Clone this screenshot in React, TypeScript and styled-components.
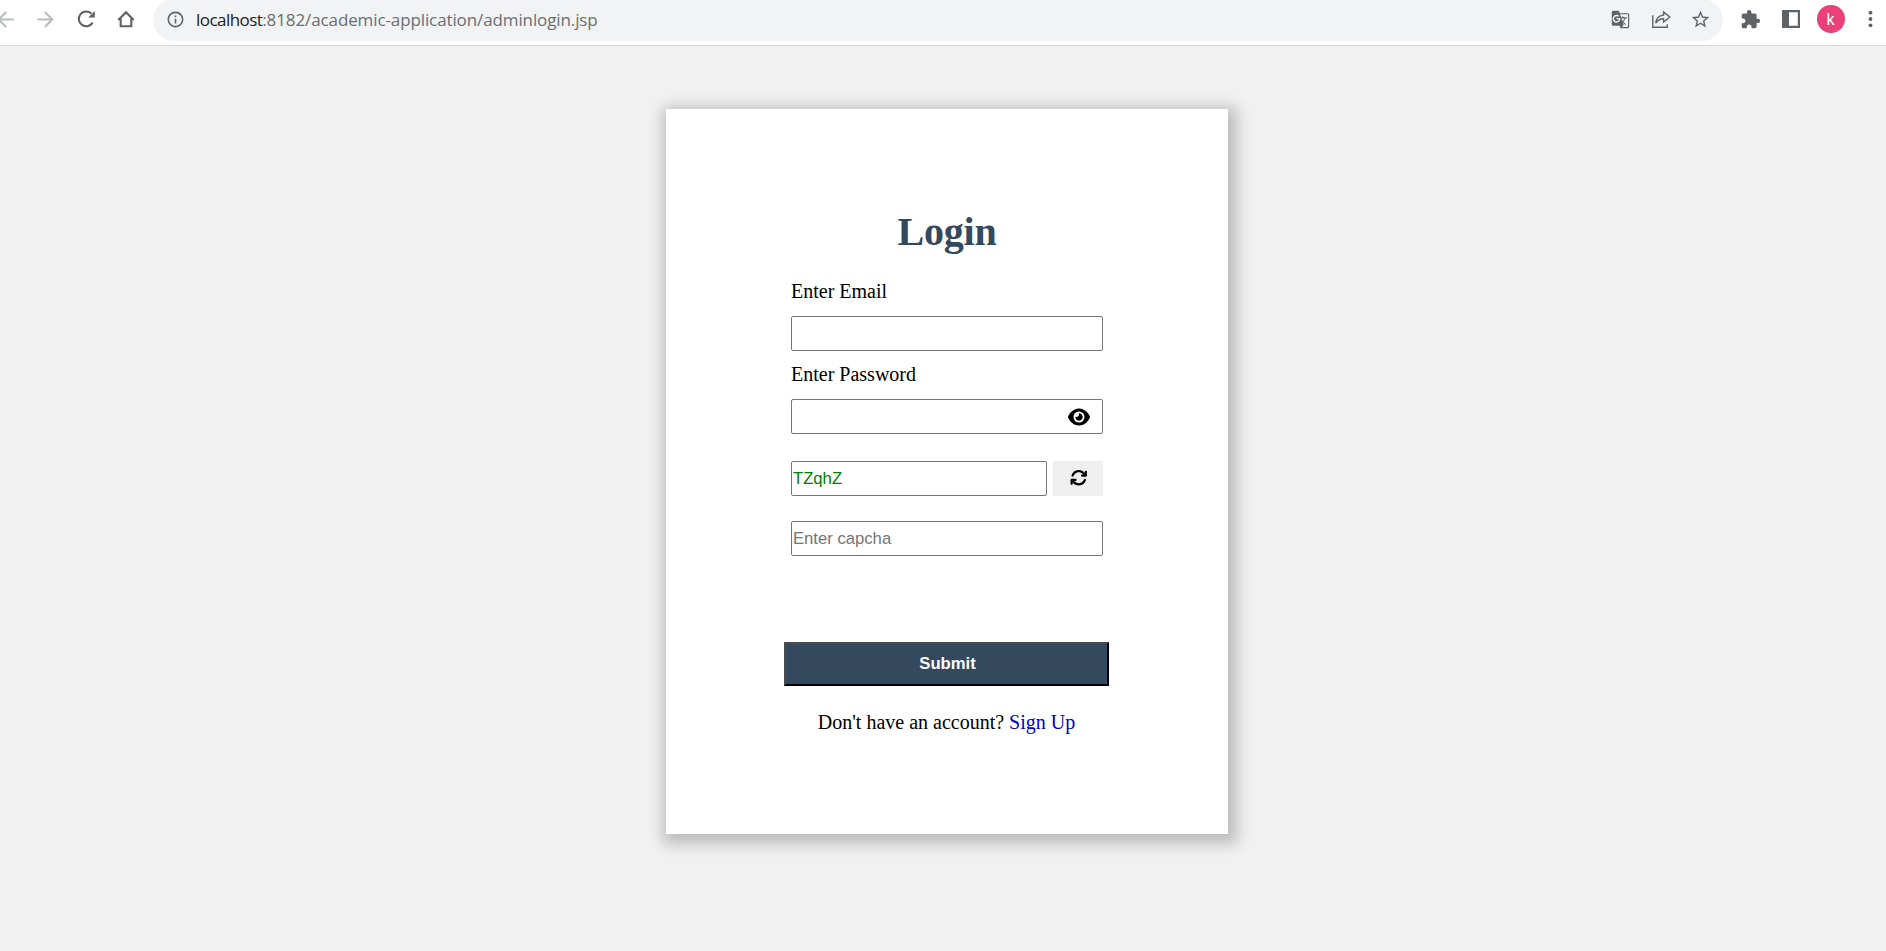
import React from "react";
import styled, { createGlobalStyle } from "styled-components";
import { FaEye, FaArrowsRotate } from "react-icons/fa6";
import { MdExtension, MdGTranslate, MdInfoOutline, MdStarBorder, MdArrowBack, MdArrowForward } from "react-icons/md";

const GlobalStyle = createGlobalStyle`
  * { box-sizing: border-box; }
  body { margin: 0; background: #f1f1f1; overflow: hidden; }
`;

const Page = styled.div`
  height: 951px;
  width: 100%;
  display: flex;
  flex-direction: column;
  align-items: center;
  font: 20px/23px "Liberation Serif", "Times New Roman", serif;
  color: #000;
`;

const Toolbar = styled.header`
  width: 100%;
  height: 46px;
  flex: none;
  display: flex;
  align-items: flex-start;
  background: #fff;
  border-bottom: 1px solid #d7d8da;
  overflow: hidden;
`;

const NavGroup = styled.nav`
  display: flex;
  gap: 15px;
  margin-left: -7px;
  width: 160px;
  flex: none;
`;

const IconSlot = styled.span<{ $muted?: boolean }>`
  width: 25px;
  height: 38px;
  flex: none;
  display: flex;
  align-items: center;
  justify-content: center;
  color: ${(p) => (p.$muted ? "#babcbe" : "#5f6368")};
  svg { display: block; flex: none; }
`;

const AddressBar = styled.div`
  flex: 1;
  height: 42px;
  margin-top: -1px;
  padding: 1px 10px 0 10px;
  border-radius: 21px;
  background: #f1f3f4;
  display: flex;
  align-items: flex-start;
`;

const Url = styled.span`
  flex: 1;
  margin-left: 8px;
  font: 17px/39px "Open Sans", "Noto Sans", sans-serif;
  letter-spacing: -0.11px;
  color: #6a6e73;
  white-space: nowrap;
`;

const Host = styled.span`
  color: #202124;
  letter-spacing: -0.55px;
`;

const Actions = styled.div`
  display: flex;
  gap: 15px;
`;

const ToolbarActions = styled.div`
  display: flex;
  gap: 15px;
  width: 163px;
  padding-left: 15px;
  flex: none;
`;

const Avatar = styled.span`
  width: 28px;
  height: 28px;
  margin: 5px -1.5px 0;
  flex: none;
  border-radius: 50%;
  background: #ec407a;
  color: #fff;
  font: 16px/29px Roboto, sans-serif;
  text-align: center;
`;

const Card = styled.main`
  width: 562px;
  height: 725px;
  margin: 63px 0 0 8px;
  padding: 99px 118px 0;
  background: #fff;
  box-shadow: 2.5px 3.5px 14px 6px rgba(0, 0, 0, 0.22);
  display: flex;
  flex-direction: column;
`;

const Title = styled.h1`
  margin: 0 0 24px;
  font-size: 40px;
  line-height: 48px;
  font-weight: bold;
  letter-spacing: -0.2px;
  text-align: center;
  color: #34495e;
`;

const Form = styled.form`
  width: 325px;
  display: flex;
  flex-direction: column;
`;

const Fields = styled.div`
  width: 312px;
  margin: 0 auto 86px 7px;
  display: flex;
  flex-direction: column;
`;

const Label = styled.label`
  height: 23px;
  margin-bottom: 13px;
`;

const Row = styled.div<{ $gap: number }>`
  display: flex;
  gap: 6px;
  height: 35px;
  margin-bottom: ${(p) => p.$gap}px;
`;

const Field = styled.div`
  flex: 1;
  display: flex;
  align-items: center;
  border: 1px solid #767676;
  border-radius: 2px;
  background: #fff;
`;

const Input = styled.input`
  flex: 1;
  min-width: 0;
  height: 100%;
  padding: 0 1px;
  border: 0;
  outline: 0;
  background: transparent;
  color: green;
  font: 16.67px "Liberation Sans", Arial, sans-serif;
  &::placeholder { color: #757575; opacity: 1; }
`;

const EyeToggle = styled.span`
  display: flex;
  margin-right: 12px;
`;

const RefreshButton = styled.button`
  width: 50px;
  height: 35px;
  padding: 0 0 1px 1px;
  border: 0;
  background: #efefef;
  color: #000;
  display: flex;
  align-items: center;
  justify-content: center;
`;

const Submit = styled.button`
  width: 325px;
  height: 44px;
  padding: 0 0 0 2px;
  border: 2px solid;
  border-color: #4c4c4c #000 #000 #4c4c4c;
  background: #34495e;
  color: #fff;
  font: bold 16.67px/20px "Liberation Sans", Arial, sans-serif;
`;

const Prompt = styled.p`
  margin: 25px 0 0;
  text-align: center;
`;

const SignUp = styled.a`
  color: #0000c8;
  text-decoration: none;
`;

const ReloadIcon = () => (
  <svg width="20" height="20" viewBox="0 0 20 20" fill="none">
    <path d="M16.6 13.6A7.4 7.4 0 1 1 15.4 4.6" stroke="currentColor" strokeWidth="2.1" />
    <path d="M18.8 2V8.6H12.2Z" fill="currentColor" />
  </svg>
);

const HomeIcon = () => (
  <svg width="20" height="20" viewBox="0 0 20 20" fill="none" stroke="currentColor" strokeWidth="2.1">
    <path d="M2.3 11.1L10 3.2L17.7 11.1M4.7 9.5V17.2H15.3V9.5" />
  </svg>
);

const ShareIcon = () => (
  <svg width="20" height="20" viewBox="0 0 20 20" fill="none" stroke="currentColor" strokeWidth="1.4">
    <path d="M1.8 6.3V18.2H16.2V15.2" />
    <path d="M4.8 14.1C5.2 9.5 8 6.5 12.6 6.1V2.9L18.8 8L12.6 13.1V9.7C9.2 9.8 6.8 11 4.8 14.1Z" />
  </svg>
);

const SidePanelIcon = () => (
  <svg width="18" height="18" viewBox="0 0 18 18">
    <path fillRule="evenodd" fill="currentColor" d="M0 0H18V18H0ZM7 2.2V15.8H15.8V2.2Z" />
  </svg>
);

const MenuIcon = () => (
  <svg width="6" height="20" viewBox="0 0 6 20" fill="currentColor">
    <circle cx="2.5" cy="3.7" r="1.9" />
    <circle cx="2.5" cy="10" r="1.9" />
    <circle cx="2.5" cy="16.3" r="1.9" />
  </svg>
);

export default function App() {
  return (
    <Page>
      <GlobalStyle />
      <Toolbar>
        <NavGroup>
          <IconSlot $muted><MdArrowBack size={25} /></IconSlot>
          <IconSlot $muted><MdArrowForward size={25} /></IconSlot>
          <IconSlot><ReloadIcon /></IconSlot>
          <IconSlot><HomeIcon /></IconSlot>
        </NavGroup>
        <AddressBar>
          <IconSlot><MdInfoOutline size={19} /></IconSlot>
          <Url><Host>localhost</Host>:8182/academic-application/adminlogin.jsp</Url>
          <Actions>
            <IconSlot><MdGTranslate size={19} /></IconSlot>
            <IconSlot><ShareIcon /></IconSlot>
            <IconSlot><MdStarBorder size={21} /></IconSlot>
          </Actions>
        </AddressBar>
        <ToolbarActions>
          <IconSlot><MdExtension size={21} /></IconSlot>
          <IconSlot><SidePanelIcon /></IconSlot>
          <Avatar>k</Avatar>
          <IconSlot><MenuIcon /></IconSlot>
        </ToolbarActions>
      </Toolbar>
      <Card>
        <Title>Login</Title>
        <Form onSubmit={(e) => e.preventDefault()}>
          <Fields>
            <Label htmlFor="email">Enter Email</Label>
            <Row $gap={12}><Field><Input id="email" /></Field></Row>
            <Label htmlFor="password">Enter Password</Label>
            <Row $gap={27}>
              <Field>
                <Input id="password" type="password" />
                <EyeToggle><FaEye size={22} /></EyeToggle>
              </Field>
            </Row>
            <Row $gap={25}>
              <Field><Input defaultValue="TZqhZ" readOnly /></Field>
              <RefreshButton type="button"><FaArrowsRotate size={17.5} /></RefreshButton>
            </Row>
            <Row $gap={0}><Field><Input placeholder="Enter capcha" /></Field></Row>
          </Fields>
          <Submit>Submit</Submit>
          <Prompt>Don't have an account? <SignUp href="#">Sign Up</SignUp></Prompt>
        </Form>
      </Card>
    </Page>
  );
}
